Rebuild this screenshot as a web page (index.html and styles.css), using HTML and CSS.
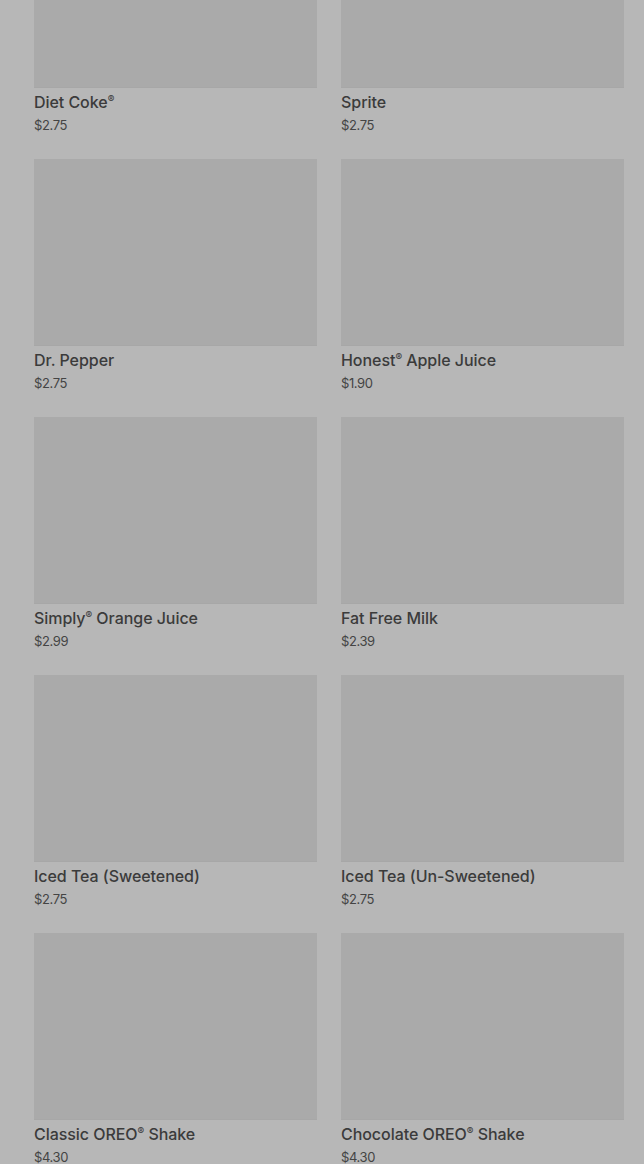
FILE: index.html
```html
<!DOCTYPE html>
<html lang="en">
<head>
    <meta charset="UTF-8">
    <meta name="viewport" content="width=device-width, initial-scale=1.0">
    <title>Drinks</title>
    <link rel="stylesheet" href="styles.css">
</head>
<body>
    <div class="menu">
        <div class="item">
            <div class="thumb"></div>
            <p class="name">Diet Coke<sup>®</sup></p>
            <p class="price">$2.75</p>
        </div>
        <div class="item">
            <div class="thumb"></div>
            <p class="name">Sprite</p>
            <p class="price">$2.75</p>
        </div>
        <div class="item">
            <div class="thumb"></div>
            <p class="name">Dr. Pepper</p>
            <p class="price">$2.75</p>
        </div>
        <div class="item">
            <div class="thumb"></div>
            <p class="name">Honest<sup>®</sup> Apple Juice</p>
            <p class="price">$1.90</p>
        </div>
        <div class="item">
            <div class="thumb"></div>
            <p class="name">Simply<sup>®</sup> Orange Juice</p>
            <p class="price">$2.99</p>
        </div>
        <div class="item">
            <div class="thumb"></div>
            <p class="name">Fat Free Milk</p>
            <p class="price">$2.39</p>
        </div>
        <div class="item">
            <div class="thumb"></div>
            <p class="name">Iced Tea (Sweetened)</p>
            <p class="price">$2.75</p>
        </div>
        <div class="item">
            <div class="thumb"></div>
            <p class="name">Iced Tea (Un-Sweetened)</p>
            <p class="price">$2.75</p>
        </div>
        <div class="item">
            <div class="thumb"></div>
            <p class="name">Classic OREO<sup>®</sup> Shake</p>
            <p class="price">$4.30</p>
        </div>
        <div class="item">
            <div class="thumb"></div>
            <p class="name">Chocolate OREO<sup>®</sup> Shake</p>
            <p class="price">$4.30</p>
        </div>
    </div>
</body>
</html>
```

FILE: styles.css
```css
body {
    font-family: Inter, "Noto Sans", sans-serif;
    margin: 0;
    padding: 0 20px 0 34px;
    background-color: #b7b7b7;
    color: #3b3b3b;
    overflow: hidden;
}

.menu {
    display: grid;
    grid-template-columns: 1fr 1fr;
    column-gap: 24px;
    row-gap: 24px;
    margin-top: -99px;
}

.thumb {
    height: 187px;
    background-color: #aaaaaa;
    border-bottom: 1px solid #a7a7a7;
    box-sizing: border-box;
}

.name {
    margin: 4px 0 0;
    font-size: 16px;
    font-weight: 500;
    line-height: 20px;
    letter-spacing: -0.05px;
}

.name sup {
    font-size: 10px;
    line-height: 0;
    vertical-align: 5px;
}

.price {
    margin: 3px 0 0;
    font-size: 13px;
    line-height: 20px;
    letter-spacing: -0.4px;
    color: #444;
}
```
